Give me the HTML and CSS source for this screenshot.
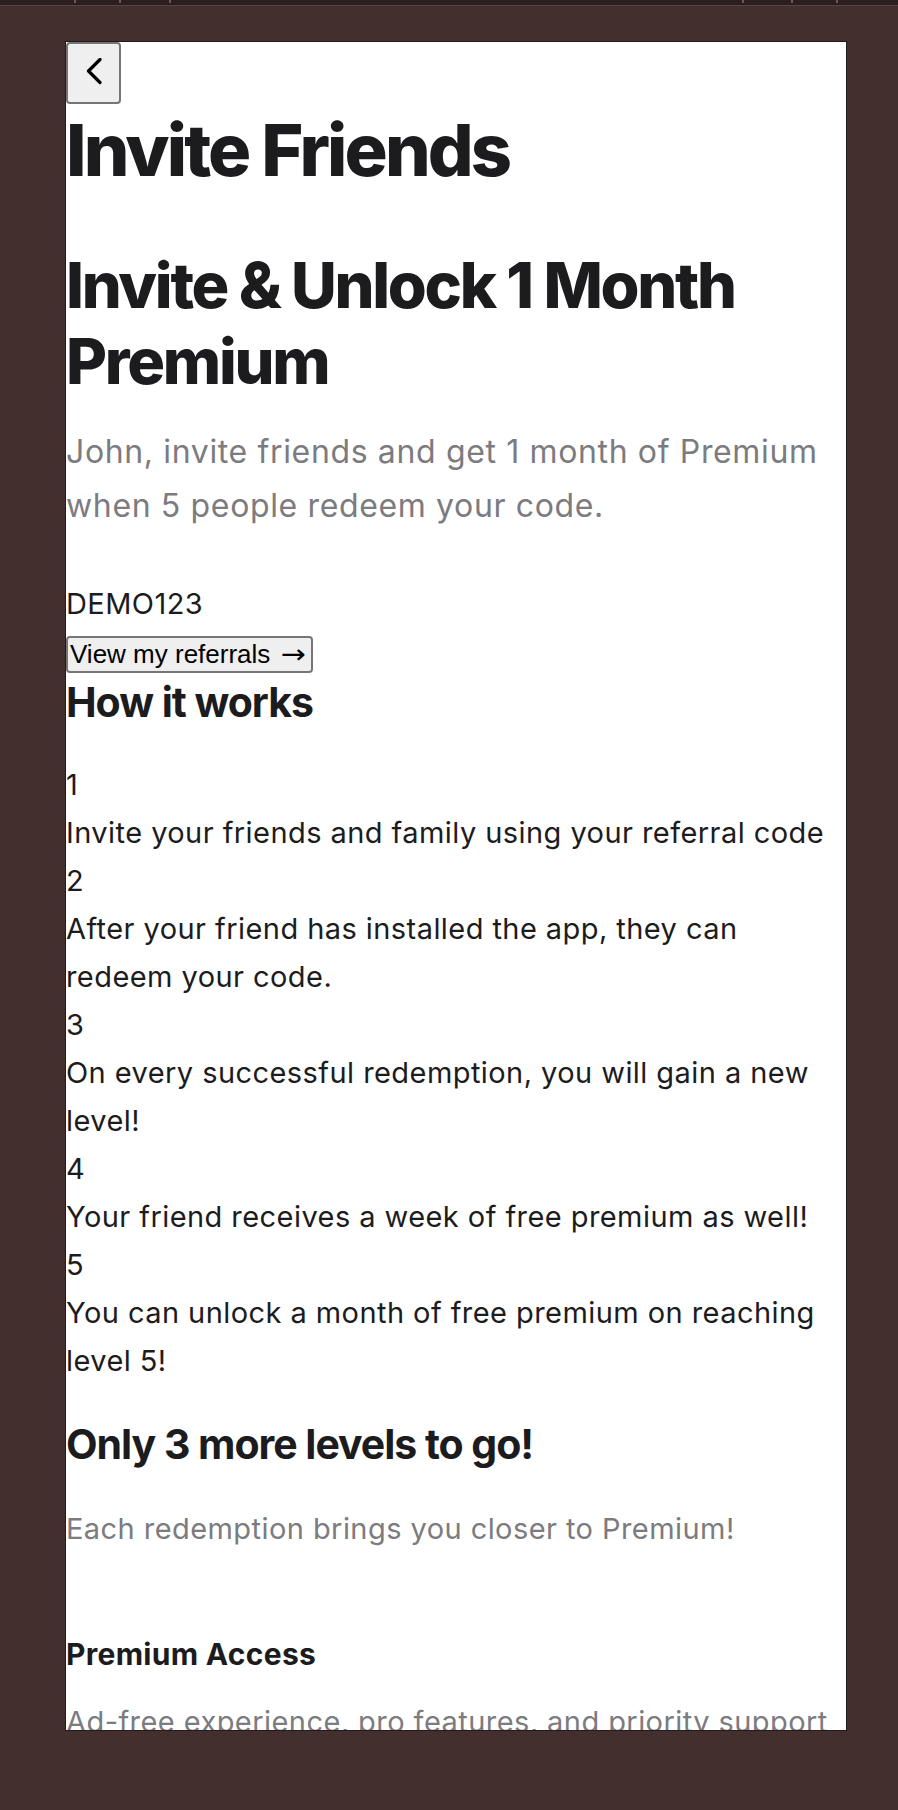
FILE: index.html
```html
<!DOCTYPE html>
<html lang="en">
<head>
<meta charset="utf-8">
<title>Invite Friends</title>
<link rel="stylesheet" href="styles.css">
</head>
<body>
<div class="topbar">
  <div class="ticks ticks-left"><span class="tick"></span><span class="tick"></span><span class="tick"></span></div>
  <div class="ticks ticks-right"><span class="tick"></span><span class="tick"></span><span class="tick"></span></div>
</div>
<div class="stage">
  <main class="card">
    <button class="back" aria-label="Back">
      <svg width="18" height="30" viewBox="0 0 18 30"><path d="M15 1.5 L3.5 13 L15 24.5" fill="none" stroke="#000" stroke-width="3.2" stroke-linecap="round" stroke-linejoin="round"/></svg>
    </button>
    <h1 class="title">Invite Friends</h1>
    <h2 class="hero">Invite &amp; Unlock 1 Month Premium</h2>
    <p class="lead">John, invite friends and get 1 month of Premium when 5 people redeem your code.</p>
    <div class="code">DEMO123</div>
    <button class="referrals">View my referrals <span class="arrow">→</span></button>
    <h3 class="section">How it works</h3>
    <ol class="steps">
      <li><div>1</div><div>Invite your friends and family using your referral code</div></li>
      <li><div>2</div><div>After your friend has installed the app, they can redeem your code.</div></li>
      <li><div>3</div><div>On every successful redemption, you will gain a new level!</div></li>
      <li><div>4</div><div>Your friend receives a week of free premium as well!</div></li>
      <li><div>5</div><div>You can unlock a month of free premium on reaching level 5!</div></li>
    </ol>
    <h3 class="section levels">Only 3 more levels to go!</h3>
    <p class="note">Each redemption brings you closer to Premium!</p>
    <div class="perk">
      <h4 class="perk-title">Premium Access</h4>
      <p class="note perk-text">Ad-free experience, pro features, and priority support</p>
    </div>
  </main>
</div>
</body>
</html>
```

FILE: styles.css
```css
html, body {
  margin: 0;
  padding: 0;
}
body {
  background: #432f2e;
  font-family: Inter, "Noto Sans", sans-serif;
  color: #1c1c1e;
}
.topbar {
  height: 5px;
  background: #2a1f1e;
  border-bottom: 1px solid #5a4442;
  display: flex;
  justify-content: space-between;
  align-items: flex-start;
}
.ticks {
  display: flex;
}
.ticks-left {
  padding-left: 74px;
}
.ticks-left .tick + .tick {
  margin-left: 43px;
}
.ticks-left .tick:last-child {
  margin-left: 48px;
}
.ticks-right {
  padding-right: 60px;
}
.ticks-right .tick + .tick {
  margin-left: 47px;
}
.ticks-right .tick:last-child {
  margin-left: 43px;
}
.tick {
  width: 2px;
  height: 3px;
  background: #6e5654;
}
.stage {
  padding: 35px 0 0 65px;
}
.card {
  width: 780px;
  height: 1688px;
  background: #fff;
  border: 1px solid #231b1b;
  overflow: hidden;
  box-sizing: content-box;
}
.back {
  display: flex;
  align-items: center;
  justify-content: center;
  width: 55px;
  height: 62px;
  margin: 0;
  padding: 0;
  background: #efefef;
  border: 2px solid #767676;
  border-radius: 4px;
}
.title {
  margin: 3px 0 0;
  font-size: 72px;
  line-height: 86px;
  font-weight: 800;
  letter-spacing: -0.04em;
}
.hero {
  margin: 54px 0 0;
  font-size: 63px;
  line-height: 76px;
  font-weight: 800;
  letter-spacing: -0.036em;
}
.lead {
  margin: 26px 0 0;
  font-size: 32px;
  line-height: 54px;
  letter-spacing: 0.02em;
  color: #7b7b80;
}
.code {
  margin-top: 47px;
  font-size: 29px;
  line-height: 48px;
  letter-spacing: 0.015em;
}
.referrals {
  display: block;
  margin: 8px 0 0;
  padding: 1px 2px;
  font-family: "Liberation Sans", Arial, sans-serif;
  font-size: 26px;
  color: #000;
  background: #efefef;
  border: 2px solid #767676;
  border-radius: 4px;
}
.arrow {
  display: inline-block;
  margin-left: 3px;
  padding-right: 7px;
  font-family: "DejaVu Sans", sans-serif;
  font-size: 26px;
  transform: scaleX(1.15);
  transform-origin: left center;
}
.section {
  margin: 5px 0 0;
  font-size: 41px;
  line-height: 48px;
  font-weight: 700;
  letter-spacing: -0.025em;
}
.steps {
  list-style: none;
  margin: 35px 0 0;
  padding: 0;
  font-size: 29px;
  line-height: 48px;
  letter-spacing: 0.015em;
}
.levels {
  margin-top: 35px;
}
.note {
  margin: 37px 0 0;
  font-size: 29px;
  line-height: 48px;
  letter-spacing: 0.015em;
  color: #7b7b80;
}
.perk {
  margin-top: 77px;
}
.perk-title {
  margin: 0;
  font-size: 30px;
  line-height: 48px;
  font-weight: 700;
  letter-spacing: 0.01em;
}
.perk-text {
  margin-top: 20px;
}
```
